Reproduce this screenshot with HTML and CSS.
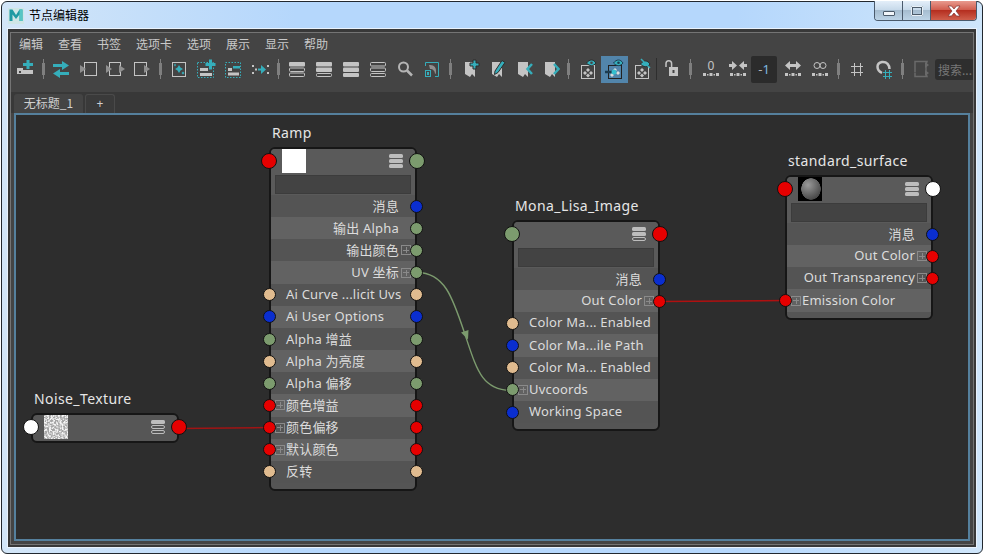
FILE: index.html
```html
<!DOCTYPE html>
<html lang="zh-CN">
<head>
  <meta charset="UTF-8" />
  <title>节点编辑器</title>
  <link rel="stylesheet" href="styles.css">
</head>

<body>
<div class="window">

  <!-- TITLE BAR -->
  <div class="titlebar">
    <svg class="app-logo" viewBox="0 0 16 16">
      <rect width="16" height="16" fill="#cfe6e6" />
      <path d="M1.500 13V1.500h3L8 7l3.500-5.500h3V13h-3V6.500L8 11 4.500 6.500V13z" fill="#1f9aa3" />
      <path d="M11.500 1.500h3V13h-3z" fill="#56c6c4" />
    </svg>
    <span class="app-title">节点编辑器</span>
    <div class="win-buttons">
      <div class="win-btn"><i class="min-glyph"></i></div>
      <div class="win-btn"><i class="max-glyph"></i></div>
      <div class="win-btn close">
        <svg viewBox="0 0 16 12" width="16" height="12"><path d="M2 1h3.500L8 4l2.500-3H14l-4 5 4 5h-3.500L8 8l-2.500 3H2l4-5z" fill="#fff" stroke="#7a3030" stroke-width=".7" /></svg>
      </div>
    </div>
  </div>

  <div class="client">
    <div class="maya">
      <div class="maya-inner">

        <!-- MENU -->
        <div class="menu">
          <span>编辑</span><span>查看</span><span>书签</span><span>选项卡</span><span>选项</span><span>展示</span><span>显示</span><span>帮助</span>
        </div>

        <!-- TOOLBAR -->
        <div class="toolbar">
          <div class="tool"><svg viewBox="0 0 22 22"><path class="g" d="M3 10h6v2h10v4H3z"/><rect class="d" x="5" y="13" width="2" height="2"/><path class="t" d="M12.500 2h3v3h3.500v3h-3.500v3h-3V8H9V5h3.500z"/></svg></div>
          <i class="sep tight"></i>
          <div class="tool"><svg viewBox="0 0 22 22"><path class="t" d="M3 6h9V3l7 4.500-7 4.500V9H3z"/><path class="t" d="M19 14h-9v-3l-7 4.500L10 20v-3h9z"/></svg></div>
          <div class="tool"><svg viewBox="0 0 22 22"><rect class="s" x="7.500" y="4.500" width="12" height="13"/><path class="m" d="M3 7l6 4-6 4z"/></svg></div>
          <div class="tool"><svg viewBox="0 0 22 22"><rect class="s" x="5.500" y="4.500" width="11" height="13"/><path class="m" d="M2 7l6 4-6 4zM15 7l6 4-6 4z"/></svg></div>
          <div class="tool"><svg viewBox="0 0 22 22"><rect class="s" x="3.500" y="4.500" width="12" height="13"/><path class="m" d="M13 7l6 4-6 4z"/></svg></div>
          <i class="sep"></i>
          <div class="tool"><svg viewBox="0 0 22 22"><rect class="s" x="4.500" y="4.500" width="13" height="14"/><path class="t" d="M11 7l1.500 2.500L15 11l-2.500 1.500L11 15l-1.500-2.500L7 11l2.500-1.500z"/><path class="t" d="M7 5.500l1 1.500-1 1.500L6 7zM15 13.500l1.500 1.500-1.500 1.500-1.500-1.500z"/></svg></div>
          <div class="tool"><svg viewBox="0 0 22 22"><rect class="dash" x="2.500" y="4.500" width="16" height="15"/><rect class="g" x="5" y="10" width="8" height="3"/><rect class="g" x="5" y="15" width="12" height="3"/><path class="t" d="M14 1.500h3V5h3.500v3H17v3.500h-3V8h-3.500V5H14z"/></svg></div>
          <div class="tool"><svg viewBox="0 0 22 22"><rect class="dash" x="3.500" y="4.500" width="15" height="15"/><rect class="g" x="6" y="14.500" width="11" height="3"/><rect class="g" x="6" y="10" width="4" height="3"/><rect class="t" x="11" y="8" width="7" height="2.500"/></svg></div>
          <div class="tool"><svg viewBox="0 0 22 22"><rect class="g" x="3" y="7" width="2" height="2"/><rect class="g" x="3" y="14" width="2" height="2"/><rect class="g" x="6" y="10.500" width="2" height="2"/><rect class="t" x="9" y="10.500" width="4" height="2"/><path class="t" d="M12 7l5 4.500-5 4.500z"/><rect class="g" x="18" y="7" width="2" height="2"/><rect class="g" x="18" y="14" width="2" height="2"/></svg></div>
          <i class="sep"></i>
          <div class="tool"><svg viewBox="0 0 22 22"><rect class="g" x="3" y="4" width="16" height="4.500" rx="1"/><rect class="s" x="3.500" y="10" width="15" height="3.500" rx="1"/><rect class="s" x="3.500" y="15" width="15" height="3.500" rx="1"/></svg></div>
          <div class="tool"><svg viewBox="0 0 22 22"><rect class="g" x="3" y="4" width="16" height="4.500" rx="1"/><rect class="g" x="3" y="9.500" width="16" height="4.500" rx="1"/><rect class="s" x="3.500" y="15.500" width="15" height="3" rx="1"/></svg></div>
          <div class="tool"><svg viewBox="0 0 22 22"><rect class="g" x="3" y="4" width="16" height="4.500" rx="1"/><rect class="g" x="3" y="9.500" width="16" height="4.500" rx="1"/><rect class="g" x="3" y="15" width="16" height="4" rx="1"/></svg></div>
          <div class="tool"><svg viewBox="0 0 22 22"><rect class="s" x="3.500" y="4.500" width="15" height="3.500" rx="1"/><rect class="s" x="3.500" y="10" width="15" height="3.500" rx="1"/><rect class="s" x="3.500" y="15.500" width="15" height="3" rx="1"/></svg></div>
          <div class="tool"><svg viewBox="0 0 22 22"><circle cx="9.500" cy="9" r="4.500" fill="none" stroke="#b5b5b5" stroke-width="2"/><path d="M13 12.500l5 5" stroke="#b5b5b5" stroke-width="2.500" fill="none"/></svg></div>
          <div class="tool"><svg viewBox="0 0 22 22"><path class="st" d="M4.500 8V4.500h13v14H14"/><rect class="st" x="4.500" y="12.500" width="5" height="6"/><rect class="st" x="6.500" y="14.500" width="1" height="2"/><path class="m" d="M8 7c4 0 7 1 7 6 0 2 0 3-1 3 0-3-2-5-5-5z"/></svg></div>
          <i class="sep"></i>
          <div class="tool push"><svg viewBox="0 0 22 22"><path class="g" d="M5 4h10v15l-3-3-2 3-5-3z" /><path class="ot" d="M13 2h3v3h3v3h-3v3h-3V8h-3V5h3z"/></svg></div>
          <div class="tool"><svg viewBox="0 0 22 22"><path class="g" d="M5 4h10v15l-3-3-2 3-5-3z" /><path class="ot" d="M15 2.500l3 2-7 10-3.500 2 .5-3.500z"/></svg></div>
          <div class="tool"><svg viewBox="0 0 22 22"><path class="g" d="M4 4h10v15l-3-3-2 3-5-3z" /><path d="M18 6l-4.500 5 4.500 5" fill="none" stroke="#35aebb" stroke-width="2.500"/></svg></div>
          <div class="tool"><svg viewBox="0 0 22 22"><path class="g" d="M4 4h10v15l-3-3-2 3-5-3z" /><path d="M13 6l4.500 5-4.500 5" fill="none" stroke="#35aebb" stroke-width="2.500"/></svg></div>
          <i class="sep narrow"></i>
          <div class="tool"><svg viewBox="0 0 22 22"><rect class="s" x="4.500" y="7.500" width="13" height="13"/><path class="g" d="M11 10l2 2-2 2-2-2zM8 13l2 2-2 2-2-2zM14 13l2 2-2 2-2-2zM11 15.500l2 2-2 2-2-2z"/><path class="ot" d="M9.500 5c3-4 7-4 9.500 0-2.500 3.500-6.500 3.500-9.500 0z"/><circle class="d" cx="14.500" cy="4.800" r="1.300"/></svg></div>
          <div class="tool selected"><svg viewBox="0 0 22 22"><rect x="4.500" y="7.500" width="13" height="13" fill="none" stroke="#222"/><path d="M11 10l2 2-2 2-2-2zM14 13l2 2-2 2-2-2zM8 15l2 2-2 2-2-2z" fill="#ddd"/><path d="M1 14h7" stroke="#1c3c50" stroke-width="2.500"/><circle cx="10" cy="14" r="2.500" fill="#35c0cf"/><path d="M9.500 5c3-4 7-4 9.500 0-2.500 3.500-6.500 3.500-9.500 0z" fill="#35aebb" stroke="#1c3c50"/><circle cx="14.500" cy="4.800" r="1.300" fill="#1c3c50"/></svg></div>
          <div class="tool"><svg viewBox="0 0 22 22"><rect class="s" x="4.500" y="7.500" width="13" height="13"/><path class="g" d="M11 10l2 2-2 2-2-2zM8 13l2 2-2 2-2-2zM14 13l2 2-2 2-2-2zM11 15.500l2 2-2 2-2-2z"/><path class="ot" d="M9.500 6c3-4 7-4 9.500 0-2.500 3.500-6.500 3.500-9.500 0z"/><path d="M10 1l9 9" stroke="#35aebb" stroke-width="1.500"/></svg></div>
          <i class="sep dark"></i>
          <div class="tool"><svg viewBox="0 0 22 22"><path d="M5 9V5.500a2.800 2.800 0 0 1 5.600 0V9" fill="none" stroke="#c4c4c4" stroke-width="1.500"/><rect class="g" x="8" y="9" width="9" height="9"/><rect class="d" x="11.500" y="12" width="2" height="3"/></svg></div>
          <i class="sep"></i>
          <div class="tool push"><svg viewBox="0 0 22 22"><text class="num" x="11" y="12">0</text><path class="g" d="M3 15h3v3H3zM7 16h1.500v1.500H7zM9.500 15h3v3h-3zM13.500 16H15v1.500h-1.500zM16 15h3v3h-3z"/></svg></div>
          <div class="tool"><svg viewBox="0 0 22 22"><path class="g" d="M2 6h3V3l5 4.500L5 12V9H2zM20 6h-3V3l-5 4.500 5 4.500V9h3z"/><path class="g" d="M3 15h3v3H3zM7 16h1.500v1.500H7zM9.500 15h3v3h-3zM13.500 16H15v1.500h-1.500zM16 15h3v3h-3z"/></svg></div>
          <div class="tool level"><span class="minus">-</span><span class="one">1</span></div>
          <div class="tool push"><svg viewBox="0 0 22 22"><path class="g" d="M8 6h6V3l5 4.500-5 4.500V9H8v3L3 7.500 8 3z"/><path class="g" d="M3 15h3v3H3zM7 16h1.500v1.500H7zM9.500 15h3v3h-3zM13.500 16H15v1.500h-1.500zM16 15h3v3h-3z"/></svg></div>
          <div class="tool"><svg viewBox="0 0 22 22"><circle class="s" cx="8" cy="7.500" r="3"/><circle class="s" cx="14" cy="7.500" r="3"/><path class="g" d="M3 15h3v3H3zM7 16h1.500v1.500H7zM9.500 15h3v3h-3zM13.500 16H15v1.500h-1.500zM16 15h3v3h-3z"/></svg></div>
          <i class="sep"></i>
          <div class="tool"><svg viewBox="0 0 22 22"><path class="s" d="M8.500 5v13M14.500 5v13M5 8.500h12M5 14.500h12"/></svg></div>
          <div class="tool"><svg viewBox="0 0 22 22"><path d="M9 15C3 12 3 5 9 4c5-.5 7.500 3 7.500 7" fill="none" stroke="#c4c4c4" stroke-width="2.500"/><path class="st" d="M12.500 12v9M16.500 12v9M10 14.500h9M10 18.500h9"/></svg></div>
          <i class="sep"></i>
          <div class="tool"><svg viewBox="0 0 22 22"><path d="M5 6.500V3.500h12l-1 3M5 15v3.500h12l-1-3M5 6.500v8M16 6.500v8" fill="none" stroke="#6a6a6a" stroke-width="1.500"/><path d="M15 4l4 3-4 3zM15 12l4 3-4 3z" fill="#6a6a6a"/></svg></div>
          <div class="search">搜索...</div>
        </div>

        <!-- TABS -->
        <div class="tabs">
          <div class="tab active">无标题_1</div>
          <div class="tab plus">+</div>
        </div>

        <!-- NODE CANVAS: node positions are the content here, so absolute -->
        <div class="canvas">
          <svg class="wires" viewBox="16 115 952 423">
            <path d="M179 428 L269 427" stroke="#a01414" stroke-width="1.500" fill="none" />
            <path d="M660 301 L785 300" stroke="#b01010" stroke-width="1.500" fill="none" />
            <path d="M417 272 C 445 272 453 298 465 334 S 482 390 512 390" stroke="#7c9b6e" stroke-width="1.400" fill="none" />
            <path d="M461 332 L468.500 329.500 L468 339 Z" fill="#7c9b6e" />
          </svg>

          <!-- Ramp -->
          <div class="node ramp">
            <div class="node-name">Ramp</div>
            <div class="node-box">
              <div class="node-head">
                <div class="node-top">
                  <div class="swatch white"></div>
                  <svg class="layout-icon"><use href="#rows-full" /></svg>
                </div>
                <i class="port big red in"></i><i class="port big green out"></i>
                <div class="node-field"></div>
              </div>
              <div class="row right"><span>消息</span><i class="port blue out"></i></div>
              <div class="row right"><span>输出 Alpha</span><i class="port green out"></i></div>
              <div class="row right"><span>输出颜色</span><i class="exp ex-r"></i><i class="port green out"></i></div>
              <div class="row right"><span>UV 坐标</span><i class="exp ex-r"></i><i class="port green out"></i></div>
              <div class="row"><i class="port tan in"></i><span>Ai Curve ...licit Uvs</span><i class="port tan out"></i></div>
              <div class="row"><i class="port blue in"></i><span>Ai User Options</span><i class="port blue out"></i></div>
              <div class="row"><i class="port green in"></i><span>Alpha 增益</span><i class="port green out"></i></div>
              <div class="row"><i class="port tan in"></i><span>Alpha 为亮度</span><i class="port tan out"></i></div>
              <div class="row"><i class="port green in"></i><span>Alpha 偏移</span><i class="port green out"></i></div>
              <div class="row"><i class="port red in"></i><i class="exp ex-l"></i><span>颜色增益</span><i class="port red out"></i></div>
              <div class="row"><i class="port red in"></i><i class="exp ex-l"></i><span>颜色偏移</span><i class="port red out"></i></div>
              <div class="row"><i class="port red in"></i><i class="exp ex-l"></i><span>默认颜色</span><i class="port red out"></i></div>
              <div class="row"><i class="port tan in"></i><span>反转</span><i class="port tan out"></i></div>
            </div>
          </div>

          <!-- Noise_Texture -->
          <div class="node noise">
            <div class="node-name">Noise_Texture</div>
            <div class="node-box flat">
              <div class="node-top">
                <svg class="swatch" viewBox="0 0 24 24">
                  <filter id="grain"><feTurbulence type="fractalNoise" baseFrequency="0.55" numOctaves="2" seed="4" /><feColorMatrix values="0 0 0 0 0.250  0 0 0 0 0.250  0 0 0 0 0.250  3.500 0 0 0 -1.200" /></filter>
                  <rect width="24" height="24" fill="#f6f6f6" />
                  <rect width="24" height="24" filter="url(#grain)" opacity=".75" />
                </svg>
                <svg class="layout-icon"><use href="#rows-one" /></svg>
              </div>
              <i class="port big white-port in"></i><i class="port big red out"></i>
            </div>
          </div>

          <!-- Mona_Lisa_Image -->
          <div class="node mona">
            <div class="node-name">Mona_Lisa_Image</div>
            <div class="node-box">
              <div class="node-head">
                <div class="node-top">
                  <div class="swatch none"></div>
                  <svg class="layout-icon"><use href="#rows-two" /></svg>
                </div>
                <i class="port big green in"></i><i class="port big red out"></i>
                <div class="node-field"></div>
              </div>
              <div class="row right"><span>消息</span><i class="port blue out"></i></div>
              <div class="row right"><span>Out Color</span><i class="exp ex-r"></i><i class="port red out"></i></div>
              <div class="row"><i class="port tan in"></i><span>Color Ma... Enabled</span></div>
              <div class="row"><i class="port blue in"></i><span>Color Ma...ile Path</span></div>
              <div class="row"><i class="port tan in"></i><span>Color Ma... Enabled</span></div>
              <div class="row"><i class="port green in"></i><i class="exp ex-l"></i><span>Uvcoords</span></div>
              <div class="row"><i class="port blue in"></i><span>Working Space</span></div>
            </div>
          </div>

          <!-- standard_surface -->
          <div class="node surface">
            <div class="node-name">standard_surface</div>
            <div class="node-box">
              <div class="node-head">
                <div class="node-top">
                  <div class="swatch ball"></div>
                  <svg class="layout-icon"><use href="#rows-full" /></svg>
                </div>
                <i class="port big red in"></i><i class="port big white-port out"></i>
                <div class="node-field"></div>
              </div>
              <div class="row right"><span>消息</span><i class="port blue out"></i></div>
              <div class="row right"><span>Out Color</span><i class="exp ex-r"></i><i class="port red out"></i></div>
              <div class="row right"><span>Out Transparency</span><i class="exp ex-r"></i><i class="port red out"></i></div>
              <div class="row"><i class="port red in"></i><i class="exp ex-l"></i><span>Emission Color</span></div>
            </div>
          </div>
        </div>

      </div>
    </div>
  </div>
</div>

<!-- shared layout icons for the node headers -->
<svg class="defs">
  <symbol id="rows-full" viewBox="0 0 14 14"><rect y="0" width="14" height="4" rx="1.500" fill="#bdbdbd"/><rect y="5" width="14" height="4" rx="1.500" fill="#bdbdbd"/><rect y="10" width="14" height="4" rx="1.500" fill="#bdbdbd"/></symbol>
  <symbol id="rows-one" viewBox="0 0 14 14"><rect y="0" width="14" height="4" rx="1.500" fill="#bdbdbd"/><rect x=".5" y="5.500" width="13" height="3" rx="1.500" fill="none" stroke="#bdbdbd"/><rect x=".5" y="10.500" width="13" height="3" rx="1.500" fill="none" stroke="#bdbdbd"/></symbol>
  <symbol id="rows-two" viewBox="0 0 14 14"><rect y="0" width="14" height="4" rx="1.500" fill="#bdbdbd"/><rect y="5" width="14" height="4" rx="1.500" fill="#bdbdbd"/><rect x=".5" y="10.500" width="13" height="3" rx="1.500" fill="none" stroke="#bdbdbd"/></symbol>
</svg>
</body>
</html>
```

FILE: styles.css
```css
/* Reset margin/padding */
* {
  margin: 0;
  padding: 0;
  box-sizing: border-box;
}

html,
body {
  height: 100%;
  overflow: hidden;
  background: #fff;
  font-family: "Noto Sans", "Noto Sans CJK SC", sans-serif;
}

body {
  padding: 1px;
}

i {
  display: block;
}

/* 1) WINDOW FRAME */
.window {
  width: 982px;
  height: 553px;
  display: flex;
  flex-direction: column;
  border: 1px solid #22282f;
  border-radius: 6px;
  background: linear-gradient(90deg, #d3e6f8 0, #b5d7fc 30%, #b5d7fc 75%, #cfe6fb 100%);
}

.titlebar {
  height: 26px;
  display: flex;
  align-items: flex-start;
  color: #000;
  font-size: 12px;
}

.app-logo {
  width: 16px;
  height: 16px;
  margin: 6px 0 0 6px;
}

.app-title {
  margin: 4px 0 0 5px;
  line-height: 18px;
  font-family: "Noto Sans CJK SC", sans-serif;
}

.win-buttons {
  display: flex;
  margin: -1px 5px 0 auto;
  height: 20px;
  border: 1px solid #4a5a6c;
  border-top: none;
  border-radius: 0 0 4px 4px;
  overflow: hidden;
}

.win-btn {
  width: 28px;
  display: flex;
  align-items: center;
  justify-content: center;
  border-right: 1px solid #4a5a6c;
  background: linear-gradient(#e3eef9 0, #c6d9ea 48%, #a6bdd0 50%, #bcd3e6 100%);
}

.win-btn.close {
  width: 45px;
  border-right: none;
  background: linear-gradient(#e89a8e 0, #d05b4c 48%, #b52f20 50%, #cf5f4c 100%);
}

.min-glyph {
  width: 12px;
  height: 5px;
  margin-top: 5px;
  background: #f2f6fa;
  border: 1px solid #4c5b6a;
  border-radius: 1px;
}

.max-glyph {
  width: 12px;
  height: 10px;
  border: 2px solid #4c5b6a;
  outline: 1px solid #e8f0f7;
  outline-offset: -1px;
  border-radius: 1px;
}

/* 2) CLIENT AREA with its nested edge lines */
.client {
  flex: 1;
  min-height: 0;
  margin: 0 5px 5px;
  border: 1px solid #e9f2fc;
  display: flex;
}

.maya {
  flex: 1;
  min-width: 0;
  display: flex;
  border: 2px solid #383838;
  border-top-width: 3px;
}

.maya-inner {
  flex: 1;
  display: flex;
  flex-direction: column;
  border: 1px solid #747474;
  background: #444;
  min-width: 0;
}

/* 3) MENU + TOOLBAR */
.menu {
  height: 22px;
  display: flex;
  gap: 15px;
  align-items: center;
  padding: 0 0 2px 8px;
  font-size: 12px;
  font-family: "Noto Sans CJK SC", sans-serif;
  color: #c9c9c9;
}

.toolbar {
  height: 28px;
  margin-bottom: 9px;
  display: flex;
  align-items: center;
}

.tool {
  width: 27px;
  height: 27px;
  flex: none;
  display: flex;
  align-items: center;
  padding-left: 3px;
}

.tool svg {
  width: 22px;
  height: 22px;
  overflow: visible;
}

.tool.push {
  margin-left: 2px;
}

.tool.selected {
  background: #5285ab;
}

.tool.level {
  width: 26px;
  padding-left: 0;
  justify-content: center;
  background: #2b2b2b;
  border-radius: 2px;
  font-size: 13px;
}

.minus {
  color: #b5b5b5;
}

.one {
  color: #7fb7e0;
}

.sep {
  width: 10px;
  height: 20px;
  flex: none;
  background: linear-gradient(#7f7f7f, #7f7f7f) 5px 0 / 1px 100% no-repeat,
    linear-gradient(#7f7f7f, #7f7f7f) 4px center / 3px 12px no-repeat;
}

.sep.tight {
  width: 9px;
}

.sep.narrow {
  width: 7px;
  margin-right: 2px;
  background-position: 3px 0, 2px center;
}

.sep.dark {
  width: 3px;
  height: 22px;
  background: linear-gradient(#2e2e2e, #2e2e2e) 1px 0 / 1px 100% no-repeat;
}

.g { fill: #c4c4c4; }
.m { fill: #8f8f8f; }
.t { fill: #35aebb; }
.d { fill: #444; }
.s { fill: none; stroke: #c4c4c4; }
.st { fill: none; stroke: #35aebb; }
.ot { fill: #35aebb; stroke: #2c2c2c; stroke-width: 1; }
.dash { fill: none; stroke: #35aebb; stroke-dasharray: 1.500 1.500; }
.num { fill: #c4c4c4; font-size: 12px; text-anchor: middle; }

.search {
  width: 38px;
  height: 21px;
  flex: none;
  margin-left: 1px;
  padding-left: 3px;
  overflow: hidden;
  white-space: nowrap;
  line-height: 21px;
  background: #2e2e2e;
  border-radius: 3px 0 0 3px;
  color: #777;
  font-size: 12px;
  font-family: "Noto Sans CJK SC", sans-serif;
}

/* 4) TABS */
.tabs {
  height: 21px;
  display: flex;
  align-items: flex-end;
  gap: 2px;
  padding-left: 3px;
  background: #383838;
}

.tab {
  height: 19px;
  display: flex;
  align-items: center;
  justify-content: center;
  padding-bottom: 2px;
  border-radius: 3px 3px 0 0;
  font-size: 12px;
  color: #cfcfcf;
}

.tab.active {
  width: 69px;
  background: #444;
  font-family: "Noto Sans CJK SC", sans-serif;
}

.tab.plus {
  width: 30px;
  border: 1px solid #4a4a4a;
  border-bottom: none;
  background: #3a3a3a;
}

/* 5) CANVAS */
.canvas {
  flex: 1;
  position: relative;
  margin: 0 3px 3px;
  border: 2px solid #55809d;
  background: #2d2d2d;
}

.wires {
  position: absolute;
  inset: 0;
  width: 100%;
  height: 100%;
}

.defs {
  display: none;
}

/* 6) NODES */
.node {
  position: absolute;
  width: 148px;
}

.ramp { left: 253px; top: 10px; }
.noise { left: 15px; top: 276px; }
.mona { left: 496px; top: 83px; }
.surface { left: 769px; top: 38px; }

.node-name {
  height: 22px;
  padding-left: 3px;
  font-size: 14px;
  line-height: 15px;
  letter-spacing: 0.4px;
  color: #e6e6e6;
  white-space: nowrap;
}

.node-box {
  position: relative;
  border: 2px solid #161616;
  border-radius: 6px;
  background: #555;
  padding-bottom: 6px;
}

.node-box.flat {
  padding-bottom: 2px;
  background: #565656;
}

.node-head {
  position: relative;
  height: 46px;
  padding-bottom: 1px;
  display: flex;
  flex-direction: column;
  justify-content: space-between;
  background: #5a5a5a;
  border-radius: 4px 4px 0 0;
}

.node-top {
  height: 24px;
  display: flex;
  justify-content: space-between;
  align-items: center;
  padding: 0 12px 0 11px;
}

.swatch {
  width: 24px;
  height: 24px;
  flex: none;
}

.swatch.white {
  background: #fff;
}

.swatch.ball {
  background:
    radial-gradient(ellipse 10px 11px at 13px 12px, transparent 95%, #000 100%),
    radial-gradient(circle 17px at 10px 8px, #9a9a9a, #3c3c3c);
}

.layout-icon {
  width: 14px;
  height: 14px;
}

.node-field {
  height: 19px;
  margin: 0 4px;
  background: #434343;
  border: 1px solid #3c3c3c;
}

.row {
  position: relative;
  height: 22.170px;
  display: flex;
  align-items: center;
  padding: 0 16px 2px 15px;
  font-size: 13px;
  letter-spacing: 0.2px;
  color: #dcdcdc;
  white-space: nowrap;
  background: #545454;
}

.row:nth-of-type(odd) {
  background: #626262;
}

.row.right {
  justify-content: flex-end;
}

/* connection ports sit over the node border */
.port {
  position: absolute;
  z-index: 1;
  top: 50%;
  width: 13px;
  height: 13px;
  margin-top: -6.500px;
  border-radius: 50%;
  border: 1.500px solid #111;
}

.port.in { left: -8px; }
.port.out { right: -8px; }

.port.big {
  top: 12px;
  width: 16px;
  height: 16px;
  margin-top: -8px;
}

.port.big.in { left: -10px; }
.port.big.out { right: -10px; }

.red { background: #e60000; }
.blue { background: #0a2ecf; }
.green { background: #7c9b6e; }
.tan { background: #e0bb8f; }
.white-port { background: #fff; }

/* small expander box beside a compound attribute */
.exp {
  position: absolute;
  width: 10px;
  height: 10px;
  top: 50%;
  margin-top: -5px;
  border: 1px solid #8a8a8a;
  background:
    linear-gradient(#8a8a8a, #8a8a8a) center / 6px 1px no-repeat,
    linear-gradient(#8a8a8a, #8a8a8a) center / 1px 6px no-repeat;
}

.ex-l { left: 4px; }
.ex-r { right: 4px; }
```
